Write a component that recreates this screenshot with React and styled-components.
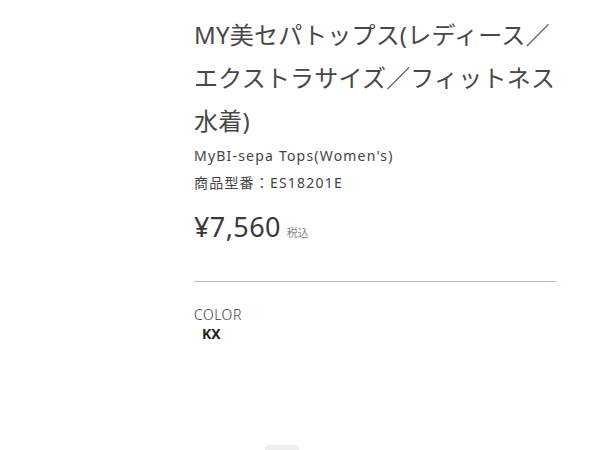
import React from 'react'
import styled, { createGlobalStyle } from 'styled-components'

const GlobalStyle = createGlobalStyle`
  body {
    margin: 0;
    background: #fff;
    font-family: 'Noto Sans', 'Noto Sans CJK JP', sans-serif;
    color: #333;
  }
`

const Page = styled.div`
  width: 600px;
  height: 450px;
  overflow: hidden;
  box-sizing: border-box;
  padding: 13px 0 0 194px;
`

const Detail = styled.div`
  width: 362px;
`

const Title = styled.h1`
  margin: 0;
  font-size: 24px;
  font-weight: 400;
  line-height: 43px;
  color: #484848;
  letter-spacing: 0.2px;
`

const SubText = styled.div`
  font-size: 14px;
  line-height: 27px;
  color: #444;
  letter-spacing: 1.2px;
`

const PriceRow = styled.div`
  display: flex;
  align-items: baseline;
  gap: 6px;
  margin-top: 11px;
  line-height: 40px;
`

const Price = styled.span`
  font-size: 27px;
  color: #3a3a3a;
  letter-spacing: 0.4px;
`

const Tax = styled.span`
  font-size: 11px;
  color: #888;
`

const Divider = styled.hr`
  border: none;
  border-top: 1px solid #b4c0ca;
  margin: 28px 0 0;
`

const OptionBlock = styled.div`
  margin-top: 23px;
  display: flex;
  flex-direction: column;
`

const OptionLabel = styled.div`
  font-size: 14px;
  font-weight: 300;
  line-height: 19px;
  color: #3a3a3a;
  letter-spacing: 0.5px;
`

const OptionValue = styled.div`
  font-size: 14px;
  font-weight: 700;
  line-height: 19px;
  padding-left: 8px;
  color: #222;
`

const GhostButton = styled.div`
  margin: 102px 0 0 71px;
  width: 34px;
  height: 20px;
  border-radius: 4px;
  background: #eeeeee;
`

export default function App() {
  return (
    <Page>
      <GlobalStyle />
      <Detail>
        <Title>
          MY美セパトップス(レディース／
          <br />
          エクストラサイズ／フィットネス
          <br />
          水着)
        </Title>
        <SubText>MyBI-sepa Tops(Women's)</SubText>
        <SubText>商品型番：ES18201E</SubText>
        <PriceRow>
          <Price>¥7,560</Price>
          <Tax>税込</Tax>
        </PriceRow>
        <Divider />
        <OptionBlock>
          <OptionLabel>COLOR</OptionLabel>
          <OptionValue>KX</OptionValue>
        </OptionBlock>
        <GhostButton />
      </Detail>
    </Page>
  )
}
